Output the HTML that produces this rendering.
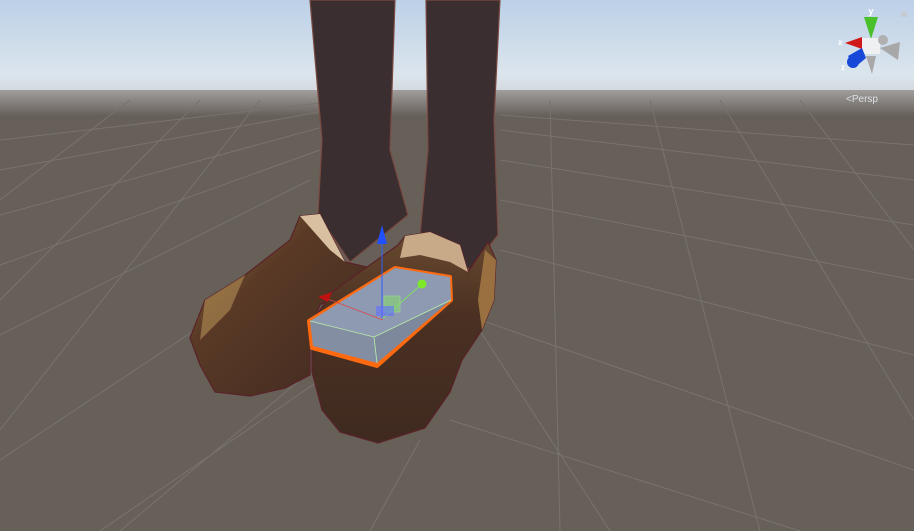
<!DOCTYPE html>
<html><head><style>
html,body{margin:0;padding:0;width:914px;height:531px;overflow:hidden;background:#676059}
svg{display:block}
</style></head><body>
<svg width="914" height="531" viewBox="0 0 914 531" xmlns="http://www.w3.org/2000/svg">
<defs>
<linearGradient id="sky" x1="0" y1="0" x2="0" y2="1">
<stop offset="0" stop-color="#bcd0e8"/>
<stop offset="0.75" stop-color="#dbe5ec"/>
<stop offset="1" stop-color="#cfd3d6"/>
</linearGradient>
<linearGradient id="hz" x1="0" y1="0" x2="0" y2="1">
<stop offset="0" stop-color="#a09e9c"/>
<stop offset="1" stop-color="#676059"/>
</linearGradient>
<linearGradient id="shoeL" x1="0" y1="0" x2="1" y2="1">
<stop offset="0" stop-color="#a07a4a"/>
<stop offset="0.35" stop-color="#5a3a26"/>
<stop offset="1" stop-color="#3e2820"/>
</linearGradient>
<linearGradient id="shoeR" x1="0" y1="0" x2="0" y2="1">
<stop offset="0" stop-color="#6a4a30"/>
<stop offset="0.4" stop-color="#4a3022"/>
<stop offset="1" stop-color="#3f2a20"/>
</linearGradient>
</defs>
<rect x="0" y="0" width="914" height="100" fill="url(#sky)"/>
<rect x="0" y="90" width="914" height="26" fill="url(#hz)"/>
<rect x="0" y="116" width="914" height="415" fill="#676059"/>
<g stroke="#79726e" stroke-width="1" fill="none">
<line x1="0" y1="170" x2="330" y2="110"/><line x1="0" y1="215" x2="330" y2="125"/>
<line x1="0" y1="265" x2="320" y2="150"/><line x1="0" y1="335" x2="310" y2="180"/>
<line x1="0" y1="460" x2="300" y2="260"/><line x1="100" y1="531" x2="320" y2="380"/>
<line x1="500" y1="160" x2="914" y2="225"/><line x1="500" y1="200" x2="914" y2="280"/>
<line x1="500" y1="250" x2="914" y2="355"/><line x1="480" y1="320" x2="914" y2="470"/>
<line x1="450" y1="420" x2="800" y2="531"/><line x1="500" y1="130" x2="914" y2="180"/>
<line x1="500" y1="115" x2="914" y2="145"/><line x1="0" y1="140" x2="320" y2="103"/>
<line x1="550" y1="100" x2="560" y2="531"/><line x1="650" y1="100" x2="760" y2="531"/>
<line x1="720" y1="100" x2="914" y2="420"/><line x1="800" y1="100" x2="914" y2="250"/>
<line x1="260" y1="100" x2="0" y2="430"/><line x1="200" y1="100" x2="0" y2="300"/>
<line x1="130" y1="100" x2="0" y2="200"/><line x1="300" y1="380" x2="120" y2="531"/>
<line x1="420" y1="440" x2="370" y2="531"/><line x1="460" y1="300" x2="610" y2="531"/>
</g>
<!-- legs -->
<path d="M310 0 L395 0 L390 150 L408 215 L350 262 L318 215 L322 140 Z" fill="#3b2e30" stroke="#7a4a40" stroke-width="1.2"/>
<path d="M426 0 L500 0 L494 120 L498 235 L470 270 L420 235 L428 150 Z" fill="#3b2e30" stroke="#7a4a40" stroke-width="1.2"/>
<!-- left shoe -->
<path d="M190 338 L205 300 L245 275 L290 240 L300 216 L320 214 L345 262 L380 270 L320 305 L310 330 L310 375 L285 388 L250 396 L215 392 L200 365 Z" fill="url(#shoeL)" stroke="#5a2228" stroke-width="1.2"/>
<path d="M300 216 L320 214 L345 262 L330 250 Z" fill="#d8c0a0"/>
<path d="M205 300 L245 275 L230 310 L200 340 Z" fill="#a6824f" opacity="0.7"/>
<!-- right shoe -->
<path d="M312 322 L332 292 L398 245 L405 236 L430 232 L460 245 L468 272 L488 242 L496 260 L494 300 L482 330 L462 360 L450 392 L425 428 L378 443 L340 432 L322 410 L312 372 Z" fill="url(#shoeR)" stroke="#5a2228" stroke-width="1.2"/>
<path d="M405 236 L430 232 L460 245 L468 272 L450 262 L420 255 L400 258 Z" fill="#c8aa88"/>
<path d="M485 250 L496 260 L494 300 L482 330 L478 300 Z" fill="#9a7040"/>
<!-- box -->
<path d="M309 321 L395 268 L450 277 L451 300 L377 366 L312 348 Z" fill="#ff6a10" stroke="#ff6a10" stroke-width="4" stroke-linejoin="round"/>
<path d="M310 321 L395 268 L450 277 L451 300 L374 337 Z" fill="#8e9ab2"/>
<path d="M310 321 L374 337 L377 363 L313 346 Z" fill="#848ea2"/>
<path d="M374 337 L451 300 L377 363 Z" fill="#7e889c"/>
<g stroke="#b8f0a8" stroke-width="0.8" fill="none">
<path d="M310 321 L374 337 L451 300 M374 337 L377 363"/>
</g>
<line x1="320" y1="296" x2="383" y2="320" stroke="#e04040" stroke-width="0.8"/>
<path d="M318 297 L332 292 L328 302 Z" fill="#c01010"/>
<line x1="382" y1="240" x2="382" y2="318" stroke="#3060ff" stroke-width="1"/>
<path d="M377 244 L382 225 L387 244 Z" fill="#2050ff"/>
<line x1="383" y1="318" x2="422" y2="284" stroke="#80e060" stroke-width="1"/>
<circle cx="422" cy="284" r="4.5" fill="#7ee82a"/>
<rect x="384" y="296" width="16" height="16" fill="#88d870" opacity="0.6" stroke="#a0f080" stroke-width="0.8"/>
<rect x="376" y="306" width="18" height="10" fill="#6070ff" opacity="0.6"/>
<!-- gizmo -->
<path d="M864 17 L878 17 L871 39 Z" fill="#4ac02a"/>
<rect x="862" y="38" width="18" height="16" fill="#eef0f2"/>
<circle cx="883" cy="40" r="5" fill="#b0b0b0"/>
<path d="M845 43 L862 37 L862 49 Z" fill="#d01818"/>
<path d="M848 56 L862 48 L866 58 L854 68 Z" fill="#1848d8"/>
<circle cx="853" cy="62" r="6" fill="#1848d8"/>
<path d="M880 48 L900 42 L898 60 Z" fill="#a8a8a8"/>
<path d="M866 56 L876 56 L872 74 Z" fill="#a8a8a8"/>
<text x="871" y="14" font-family="Liberation Sans, sans-serif" font-size="9" fill="#fff" text-anchor="middle" font-weight="bold">y</text>
<text x="838" y="45" font-family="Liberation Sans, sans-serif" font-size="8" fill="#fff" font-weight="bold">x</text>
<text x="841" y="70" font-family="Liberation Sans, sans-serif" font-size="8" fill="#fff" font-weight="bold">z</text>
<rect x="901" y="12" width="6" height="5" fill="#c8ccd2"/>
<text x="846" y="102" font-family="Liberation Sans, sans-serif" font-size="10" fill="#dde0e4">&lt;Persp</text>
</svg>
</body></html>
